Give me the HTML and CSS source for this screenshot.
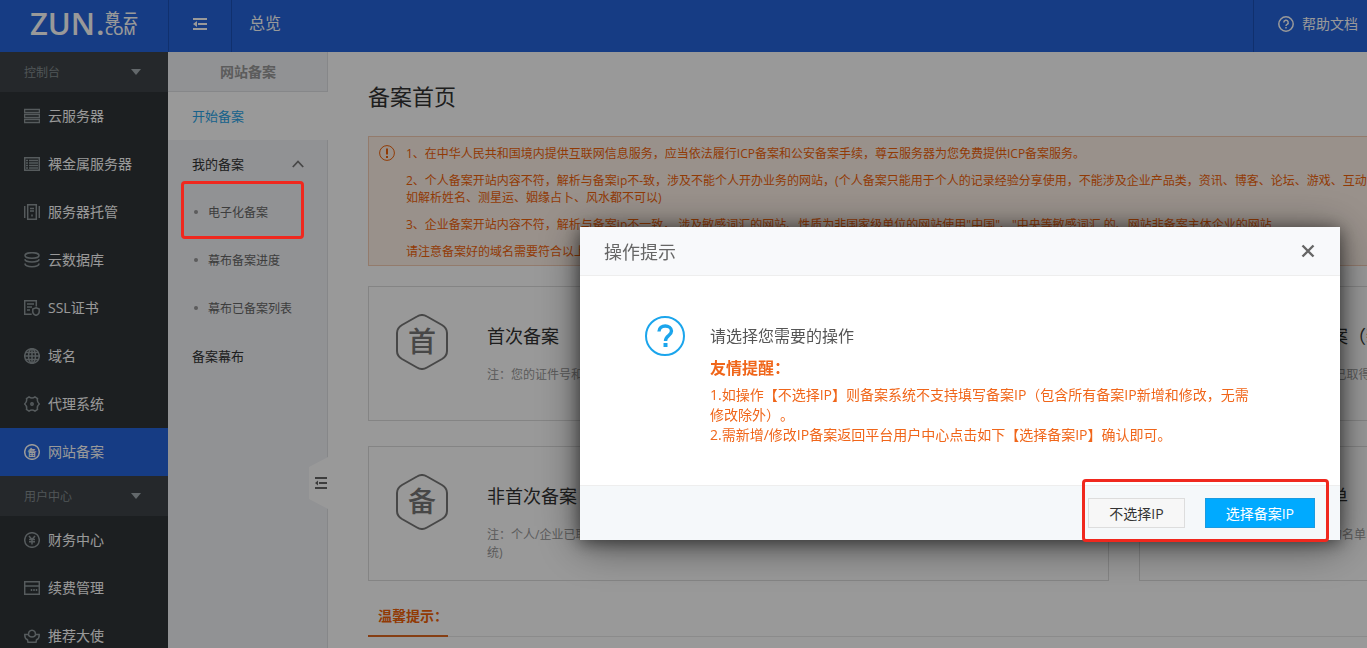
FILE: index.html
```html
<!DOCTYPE html>
<html lang="zh-CN">
<head>
<meta charset="utf-8">
<title>备案首页</title>
<link rel="stylesheet" href="styles.css">
</head>
<body>
<div class="app">
  <header class="topbar">
    <a class="logo" href="#" aria-label="ZUN.COM 尊云">
      <svg width="120" height="48" viewBox="0 0 120 48">
        <text class="logo-main" x="0" y="35">ZUN</text>
        <text class="logo-main" x="66" y="35">.</text>
        <text class="logo-cn" x="75" y="24">尊</text>
        <text class="logo-cn" x="93" y="24">云</text>
        <text class="logo-com" x="75" y="35">COM</text>
      </svg>
    </a>
    <button class="fold" type="button" aria-label="收起菜单">
      <svg width="14" height="12" viewBox="0 0 14 12" fill="currentColor"><path d="M0 0h14v2H0zM5 5h9v2H5zM0 10h14v2H0zM4 3v6L0 6z"/></svg>
    </button>
    <a class="overview" href="#">总览</a>
    <a class="help" href="#">
      <svg width="16" height="16" viewBox="0 0 16 16" fill="none" stroke="currentColor" stroke-width="1.5"><circle cx="8" cy="8" r="7.2"/><path d="M5.8 6.4a2.2 2.2 0 1 1 3.3 1.9C8.300 8.700 8 9 8 9.900"/><path d="M8 11v1.500"/></svg>
      帮助文档
    </a>
  </header>

  <div class="columns">
    <nav class="sidebar" aria-label="主导航">
      <button class="group" type="button">控制台<i class="caret"></i></button>
      <a class="item" href="#"><svg class="ico" viewBox="0 0 16 16"><path d="M.5 1.500h15v3H.5zM.5 6.500h15v3H.5zM.5 11.500h15v3H.5z"/></svg>云服务器</a>
      <a class="item" href="#"><svg class="ico" viewBox="0 0 16 16"><path d="M.7 1.700h14.600v12.600H.7zM2 4.500h2M5 4.500h9M2 7h2M5 7h9M2 9.500h2M5 9.500h9M2 12h2M5 12h9"/></svg>裸金属服务器</a>
      <a class="item" href="#"><svg class="ico" viewBox="0 0 16 16"><path d="M.7 2v12M15.300 2v12M3.700.7h8.600v14.600H3.700zM6 4.500h4M6 7h4M8 10.500v2"/></svg>服务器托管</a>
      <a class="item" href="#"><svg class="ico" viewBox="0 0 16 16"><ellipse cx="8" cy="3.500" rx="7" ry="2.800"/><path d="M.8 7.200c1 3.600 13.400 3.600 14.400 0M.8 11.500c1 4.200 13.400 4.200 14.400 0"/></svg>云数据库</a>
      <a class="item" href="#"><svg class="ico" viewBox="0 0 16 16"><path d="M12.300 6.500V.7H.7v13.600h7M3 4h7M3 7h5M3 10h3M12 7.800l3.200 1.200v3c0 1.800-1.500 2.700-3.200 3.400-1.700-.7-3.200-1.600-3.200-3.400V9z"/></svg>SSL证书</a>
      <a class="item" href="#"><svg class="ico" viewBox="0 0 16 16"><circle cx="8" cy="8" r="7.300"/><ellipse cx="8" cy="8" rx="3.500" ry="7.300"/><path d="M8 .7v14.600M.7 8h14.600M2 4.500h12M2 11.500h12"/></svg>域名</a>
      <a class="item" href="#"><svg class="ico" viewBox="0 0 16 16"><path d="M5 .9q3 2.400 6 0l2.500 1.700q-.8 3.200 1.800 5.400-2.600 2.200-1.800 5.400L11 15.100q-3-2.400-6 0l-2.500-1.700Q3.300 10.200.7 8q2.600-2.200 1.800-5.400z"/><circle cx="8" cy="8" r="1.200"/></svg>代理系统</a>
      <a class="item active" href="#" aria-current="page"><svg class="ico" viewBox="0 0 16 16"><circle cx="8" cy="8" r="7.300"/><text class="ico-char" x="8" y="11.500">备</text></svg>网站备案</a>
      <button class="group" type="button">用户中心<i class="caret"></i></button>
      <a class="item" href="#"><svg class="ico" viewBox="0 0 16 16"><circle cx="8" cy="8" r="7.300"/><path d="m5 4 3 3.500L11 4M5 7.500h6M5 9.800h6M8 7.500V12.500"/></svg>财务中心</a>
      <a class="item" href="#"><svg class="ico" viewBox="0 0 16 16"><path d="M.7 1.700h14.600v12.600H.7zM.7 6h14.600M7.500 9v2M10 9v2M12.500 9v2"/></svg>续费管理</a>
      <a class="item" href="#"><svg class="ico" viewBox="0 0 16 16"><path d="M.8 6.500h3.500c1 3.200 6.400 3.200 7.400 0h3.500c.2 2.800-1 4.500-2.700 5.300l-.5 2.500H4l-.5-2.500C1.800 11 .6 9.300.8 6.500z"/><path d="M4.700 6.500a3.400 3.400 0 1 1 6.600 0"/></svg>推荐大使</a>
    </nav>

    <nav class="subnav" aria-label="网站备案">
      <h2 class="subnav-title">网站备案</h2>
      <a class="sub current" href="#">开始备案</a>
      <a class="sub" href="#">我的备案<svg width="12" height="8" viewBox="0 0 12 8" fill="none" stroke="#777" stroke-width="1.800"><path d="m.8 7 5.200-5.500L11.200 7"/></svg></a>
      <a class="leaf" href="#">电子化备案</a>
      <a class="leaf" href="#">幕布备案进度</a>
      <a class="leaf" href="#">幕布已备案列表</a>
      <a class="sub" href="#">备案幕布</a>
      <button class="subnav-toggle" type="button" aria-label="收起子菜单">
        <svg width="12" height="12" viewBox="0 0 12 12" fill="currentColor"><path d="M0 0h12v2H0zM4 5h8v2H4zM0 10h12v2H0zM3 3.500v5L0 6z"/></svg>
      </button>
    </nav>

    <main class="main">
      <h1 class="title">备案首页</h1>
      <section class="notice">
        <svg class="notice-icon" width="16" height="16" viewBox="0 0 16 16" fill="none" stroke="currentColor"><circle cx="8" cy="8" r="7.400"/><path stroke-width="2" d="M8 3.500v6M8 11v2"/></svg>
        <div class="notice-text">
          <p>1、在中华人民共和国境内提供互联网信息服务，应当依法履行ICP备案和公安备案手续，尊云服务器为您免费提供ICP备案服务。</p>
          <p>2、个人备案开站内容不符，解析与备案ip不-致，涉及不能个人开办业务的网站，(个人备案只能用于个人的记录经验分享使用，不能涉及企业产品类，资讯、博客、论坛、游戏、互动<br>如解析姓名、测星运、姻缘占卜、风水都不可以)</p>
          <p>3、企业备案开站内容不符，解析与备案ip不一致， 涉及敏感词汇的网站、性质为非国家级单位的网站使用"中国"、"中央等敏感词汇 的、网站非备案主体企业的网站</p>
          <p>请注意备案好的域名需要符合以上要求</p>
        </div>
      </section>

      <section class="cards">
        <a class="card" href="#">
          <svg class="hex" viewBox="0 0 52 56"><path d="M21 2.500q5-3 10 0l15 8.500q5 3 5 8v18q0 5-5 8l-15 8.500q-5 3-10 0L6 45q-5-3-5-8V19q0-5 5-8z"/><text x="26" y="38">首</text></svg>
          <div class="card-text"><h3>首次备案</h3><p>注：您的证件号和域名均未办理过备案</p></div>
        </a>
        <a class="card" href="#">
          <svg class="hex" viewBox="0 0 52 56"><path d="M21 2.500q5-3 10 0l15 8.500q5 3 5 8v18q0 5-5 8l-15 8.500q-5 3-10 0L6 45q-5-3-5-8V19q0-5 5-8z"/><text x="26" y="38">新</text></svg>
          <div class="card-text"><h3>非首次备案（新增网站）</h3><p>注：个人/企业已取得备案号</p></div>
        </a>
        <a class="card" href="#">
          <svg class="hex" viewBox="0 0 52 56"><path d="M21 2.500q5-3 10 0l15 8.500q5 3 5 8v18q0 5-5 8l-15 8.500q-5 3-10 0L6 45q-5-3-5-8V19q0-5 5-8z"/><text x="26" y="38">备</text></svg>
          <div class="card-text"><h3>非首次备案</h3><p>注：个人/企业已取得备案号<br>统)</p></div>
        </a>
        <a class="card" href="#">
          <svg class="hex" viewBox="0 0 52 56"><path d="M21 2.500q5-3 10 0l15 8.500q5 3 5 8v18q0 5-5 8l-15 8.500q-5 3-10 0L6 45q-5-3-5-8V19q0-5 5-8z"/><text x="26" y="38">单</text></svg>
          <div class="card-text"><h3>备案黑名单</h3><p>注：查看备案的名单</p></div>
        </a>
      </section>

      <div class="tabs"><h2 class="tab">温馨提示：</h2></div>
    </main>
  </div>
</div>

<div class="mask"></div>

<section class="dialog" role="dialog" aria-modal="true" aria-labelledby="dialog-title">
  <header class="dialog-head">
    <h2 id="dialog-title">操作提示</h2>
    <button class="close" type="button" aria-label="关闭">
      <svg width="14" height="14" viewBox="0 0 14 14" fill="none" stroke="currentColor" stroke-width="2.400"><path d="m1.500 1.500 11 11M12.500 1.500l-11 11"/></svg>
    </button>
  </header>
  <div class="dialog-body">
    <svg class="ask" viewBox="0 0 40 40" fill="none" stroke="currentColor"><circle cx="20" cy="20" r="19" stroke-width="2"/><path stroke-width="3.400" d="M14 15.500c0-7.500 12.500-7 12.500-.5 0 4.500-6 4.500-6 10"/><path stroke-width="4" d="M20.500 27v4"/></svg>
    <div class="dialog-text">
      <p class="lead">请选择您需要的操作</p>
      <p class="warn">友情提醒：</p>
      <p class="detail">1.如操作【不选择IP】则备案系统不支持填写备案IP（包含所有备案IP新增和修改，无需修改除外）。</p>
      <p class="detail">2.需新增/修改IP备案返回平台用户中心点击如下【选择备案IP】确认即可。</p>
    </div>
  </div>
  <footer class="dialog-foot">
    <div class="actions">
      <button class="btn" type="button">不选择IP</button>
      <button class="btn primary" type="button">选择备案IP</button>
    </div>
  </footer>
</section>
<div class="marker"></div>
</body>
</html>
```
FILE: styles.css
```css
* { box-sizing: border-box; }

body {
  margin: 0;
  overflow: hidden;
  font-family: "Open Sans", "Noto Sans CJK SC", sans-serif;
  font-size: 14px;
  text-spacing-trim: space-all;
  color: #333;
  background: #fff;
}

h1, h2, h3, p { margin: 0; font-weight: 400; }
a { color: inherit; text-decoration: none; }
button { font: inherit; color: inherit; border: 0; padding: 0; background: none; cursor: pointer; }
svg { flex: none; display: block; }

.app { display: flex; flex-direction: column; height: 100vh; overflow: hidden; }

/* top bar */
.topbar { display: flex; flex: none; height: 52px; color: #fff; background: #2564dc; }
.logo { width: 168px; padding-left: 30px; }
.logo text { fill: #fff; }
.logo-main { font-size: 31px; font-weight: 600; }
.logo-cn { font-size: 15px; font-weight: 500; }
.logo-com { font-size: 13px; font-weight: 600; }
.fold {
  display: flex;
  align-items: center;
  justify-content: center;
  width: 64px;
  padding-bottom: 4px;
  border: solid #1c51b8;
  border-width: 0 1px;
}
.overview { padding-left: 17px; font-size: 16px; line-height: 46px; }
.help {
  display: flex;
  align-items: center;
  gap: 8px;
  margin-left: auto;
  padding: 0 9px 4px 24px;
  line-height: 18px;
  border-left: 1px solid #1c51b8;
}

.columns { display: flex; flex: 1; min-height: 0; }

/* main navigation */
.sidebar { flex: none; width: 168px; overflow: hidden; color: #fff; background: #2f3437; }
.group {
  display: flex;
  align-items: center;
  justify-content: space-between;
  width: 100%;
  height: 40px;
  padding: 0 27px 0 24px;
  font-size: 12px;
  color: #858e92;
  background: #3f4448;
}
.caret { border: 5px solid transparent; border-top: 6px solid #a5aeb2; border-bottom: 0; }
.item { display: flex; align-items: center; gap: 8px; height: 48px; padding-left: 24px; line-height: 18px; }
.ico { width: 16px; height: 16px; fill: none; stroke: #8f989c; stroke-width: 1.5; }
.ico-char { font-size: 9px; font-weight: 700; text-anchor: middle; fill: #fff; stroke: none; }
.active { background: #2564dc; }
.active .ico { stroke: #fff; }

/* secondary navigation */
.subnav { position: relative; flex: none; width: 160px; background: linear-gradient(to left, #e0e1e4 1px, #f2f3f7 1px); }
.subnav-title {
  height: 40px;
  font-size: 14px;
  font-weight: 700;
  line-height: 40px;
  text-align: center;
  color: #999;
  border-bottom: 1px solid #e0e1e4;
}
.sub {
  display: flex;
  align-items: center;
  justify-content: space-between;
  height: 48px;
  padding: 0 24px;
  font-size: 13px;
  line-height: 18px;
}
.current { color: #2aa4e8; background: #fff; }
.leaf {
  display: flex;
  align-items: center;
  gap: 10px;
  height: 48px;
  padding-left: 26px;
  font-size: 12px;
  color: #666;
}
.leaf::before { content: ""; width: 4px; height: 4px; border-radius: 50%; background: #999; }
.subnav-toggle {
  position: absolute;
  right: 0;
  top: 405px;
  display: flex;
  align-items: center;
  justify-content: center;
  width: 19px;
  height: 52px;
  padding-left: 5px;
  color: #666;
  background: #fff;
  clip-path: polygon(0 10px, 100% 0, 100% 100%, 0 42px);
}

/* page content */
.main { flex: 1; min-width: 0; overflow: hidden; padding: 28px 40px 0; }
.title { font-size: 22px; line-height: 32px; }
.notice {
  display: flex;
  gap: 11px;
  min-width: 1512px;
  margin-top: 24px;
  padding: 8px 10px 5px;
  font-size: 12px;
  line-height: 17px;
  color: #f26208;
  background: #fff2e8;
  border: 1px solid #f5cdb5;
}
.notice-text { display: grid; gap: 10px; white-space: nowrap; }
.cards {
  display: grid;
  grid-template-columns: 1fr 1fr;
  gap: 25px 30px;
  min-width: 1512px;
  margin-top: 20px;
}
.card { display: flex; gap: 39px; height: 135px; padding: 27px; border: 1px solid #ddd; }
.hex { width: 52px; height: 56px; fill: none; stroke: #777; stroke-width: 2; }
.hex text { font-size: 28px; font-weight: 500; text-anchor: middle; fill: #777; stroke: none; }
.card-text { padding-top: 8px; }
.card-text h3 { font-size: 18px; line-height: 28px; }
.card-text p { margin-top: 16px; font-size: 12px; line-height: 18px; color: #999; }
.tabs { display: flex; min-width: 1512px; height: 40px; margin-top: 16px; border-bottom: 1px solid #e8e8e8; }
.tab {
  width: 80px;
  height: 40px;
  padding-left: 10px;
  font-size: 14px;
  font-weight: 700;
  line-height: 38px;
  white-space: nowrap;
  color: #f26208;
  border-bottom: 2px solid #e06820;
}

/* modal */
.mask { position: fixed; inset: 0; background: rgba(0, 0, 0, .4); }
.dialog {
  position: fixed;
  right: 27px;
  top: 227px;
  width: 760px;
  background: #fff;
  box-shadow: 0 6px 40px rgba(0, 0, 0, .5), 0 2px 16px rgba(0, 0, 0, .5);
}
.dialog-head {
  display: flex;
  align-items: center;
  justify-content: space-between;
  height: 49px;
  padding: 0 25px 0 24px;
  color: #666;
  background: #f8f9fb;
  border-bottom: 1px solid #eee;
}
.dialog-head h2 { font-size: 18px; }
.dialog-body { display: flex; gap: 25px; padding: 40px 85px 40px 65px; }
.ask { width: 40px; height: 40px; color: #1ba5ec; }
.dialog-text { width: 545px; padding-top: 4px; }
.lead, .warn { font-size: 16px; line-height: 32px; color: #555; }
.warn { margin-bottom: 1px; font-weight: 700; }
.warn, .detail { color: #f0661a; }
.detail { line-height: 20px; }
.dialog-foot {
  display: flex;
  justify-content: flex-end;
  padding: 12px 25px;
  background: #f5f8fa;
  border-top: 1px solid #eee;
}
.actions { position: relative; display: flex; gap: 20px; }
.btn { height: 30px; padding: 0 20px; background: #f7f7f7; border: 1px solid #ddd; }
.primary { color: #fff; background: #00aaff; border-color: #1a9be0; }

/* callout frames */
.marker, .actions::after {
  position: absolute;
  border: 3px solid #f0281e;
  border-radius: 4px;
  pointer-events: none;
}
.marker { left: 181px; top: 181px; width: 123px; height: 58px; }
.actions::after { content: ""; inset: -19px -14px -14px -6px; }
```
